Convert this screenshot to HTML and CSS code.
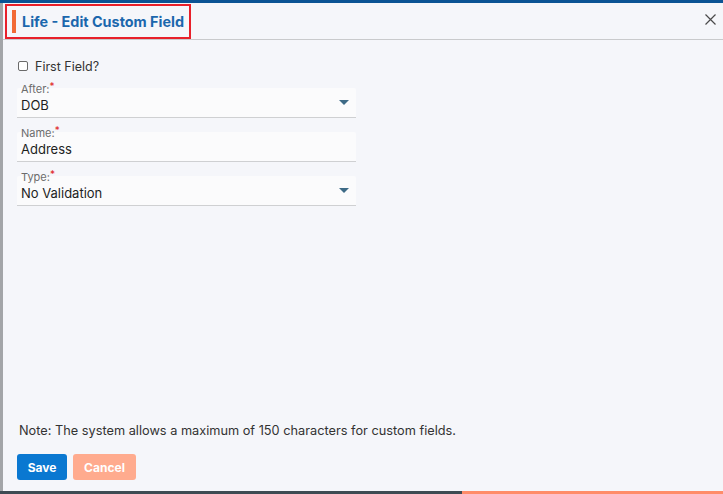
FILE: index.html
```html
<!DOCTYPE html>
<html>
<head>
<meta charset="utf-8">
<link rel="stylesheet" href="styles.css">
</head>
<body>
<div class="page">
  <div class="topbar"></div>
  <div class="main">
    <div class="side"></div>
    <div class="modal">
      <div class="header">
        <div class="title-box">
          <span class="title-mark"></span>
          <span class="title">Life - Edit Custom Field</span>
        </div>
        <button class="close" aria-label="Close">
          <svg width="11" height="11" viewBox="0 0 11 11"><path d="M0.5 0.5L10.5 10.5M10.5 0.5L0.5 10.5" stroke="#4a4a4a" stroke-width="1.2" fill="none"/></svg>
        </button>
      </div>
      <div class="body">
        <label class="check-row"><span class="checkbox"></span><span>First Field?</span></label>
        <div class="fields">
          <div class="field">
            <div class="label">After:<span class="req">*</span></div>
            <div class="value">DOB</div>
            <span class="caret"></span>
          </div>
          <div class="field">
            <div class="label">Name:<span class="req">*</span></div>
            <div class="value">Address</div>
          </div>
          <div class="field">
            <div class="label">Type:<span class="req">*</span></div>
            <div class="value">No Validation</div>
            <span class="caret"></span>
          </div>
        </div>
        <div class="spacer"></div>
        <p class="note">Note: The system allows a maximum of 150 characters for custom fields.</p>
        <div class="actions">
          <button class="btn save">Save</button>
          <button class="btn cancel">Cancel</button>
        </div>
      </div>
    </div>
  </div>
  <div class="bottombar"><span class="dark"></span><span class="orange"></span></div>
</div>
</body>
</html>
```
FILE: styles.css
```css
html, body {
  margin: 0;
  padding: 0;
}
body {
  font-family: Inter, "Noto Sans", sans-serif;
  background: #f5f6fa;
  color: #2b2b2b;
}
.page {
  width: 723px;
  height: 494px;
  display: flex;
  flex-direction: column;
  overflow: hidden;
}
.topbar {
  height: 3px;
  background: #0b5394;
  flex: none;
}
.main {
  flex: 1;
  display: flex;
  min-height: 0;
}
.side {
  width: 3px;
  background: #a3a5a8;
  flex: none;
}
.modal {
  flex: 1;
  display: flex;
  flex-direction: column;
  background: #f5f6fa;
}
.header {
  height: 36px;
  border-bottom: 1px solid #c9cacc;
  display: flex;
  align-items: flex-start;
  justify-content: space-between;
  flex: none;
}
.title-box {
  margin-left: 2px;
  margin-top: 1px;
  width: 182px;
  height: 31px;
  border: 2px solid #e8202a;
  display: flex;
  align-items: center;
  box-sizing: content-box;
}
.title-mark {
  width: 4px;
  height: 23px;
  background: #f26a36;
  margin-left: 5px;
  margin-right: 6px;
}
.title {
  font-size: 14.4px;
  font-weight: 700;
  color: #1b67ad;
}
.close {
  border: 0;
  background: transparent;
  padding: 0;
  margin: 11px 7px 0 0;
  width: 11px;
  height: 11px;
  display: flex;
}
.body {
  flex: 1;
  display: flex;
  flex-direction: column;
  padding: 19px 0 11px 14px;
}
.check-row {
  display: flex;
  align-items: center;
  height: 14px;
  font-size: 12.5px;
  color: #333;
}
.checkbox {
  width: 8px;
  height: 8px;
  border: 1px solid #6a6a6a;
  border-radius: 2px;
  background: #fff;
  margin-left: 1px;
  margin-right: 7px;
}
.fields {
  margin-top: 15px;
  width: 339px;
  display: flex;
  flex-direction: column;
  gap: 14px;
}
.field {
  height: 29px;
  border-bottom: 1px solid #cfd0d2;
  background: #fbfbfc;
  border-radius: 2px 2px 0 0;
  display: flex;
  flex-direction: column;
  position: relative;
  padding-left: 4px;
}
.label {
  font-size: 11px;
  line-height: 12px;
  color: #6c6c6c;
  margin-top: -8px;
}
.req {
  color: #e01b1b;
  font-size: 10px;
  vertical-align: 3px;
}
.value {
  font-size: 13px;
  line-height: 16px;
  color: #1e1e1e;
  margin-top: 2px;
}
.caret {
  position: absolute;
  right: 7px;
  top: 12px;
  width: 0;
  height: 0;
  border-left: 5px solid transparent;
  border-right: 5px solid transparent;
  border-top: 5px solid #3d6a86;
}
.spacer {
  flex: 1;
}
.note {
  margin: 0 0 0 2px;
  font-size: 12.75px;
  line-height: 16px;
  color: #333;
}
.actions {
  display: flex;
  gap: 6px;
  margin-top: 15px;
}
.btn {
  height: 26px;
  border: 0;
  border-radius: 3px;
  color: #fff;
  font-family: Inter, "Noto Sans", sans-serif;
  font-size: 12px;
  font-weight: 700;
  padding: 0;
}
.save {
  width: 50px;
  background: #0a78d1;
}
.cancel {
  width: 63px;
  background: #ffab8e;
}
.bottombar {
  height: 3px;
  display: flex;
  flex: none;
}
.bottombar .dark {
  width: 462px;
  background: #3e4b53;
}
.bottombar .orange {
  flex: 1;
  background: #ff8c69;
}
```
